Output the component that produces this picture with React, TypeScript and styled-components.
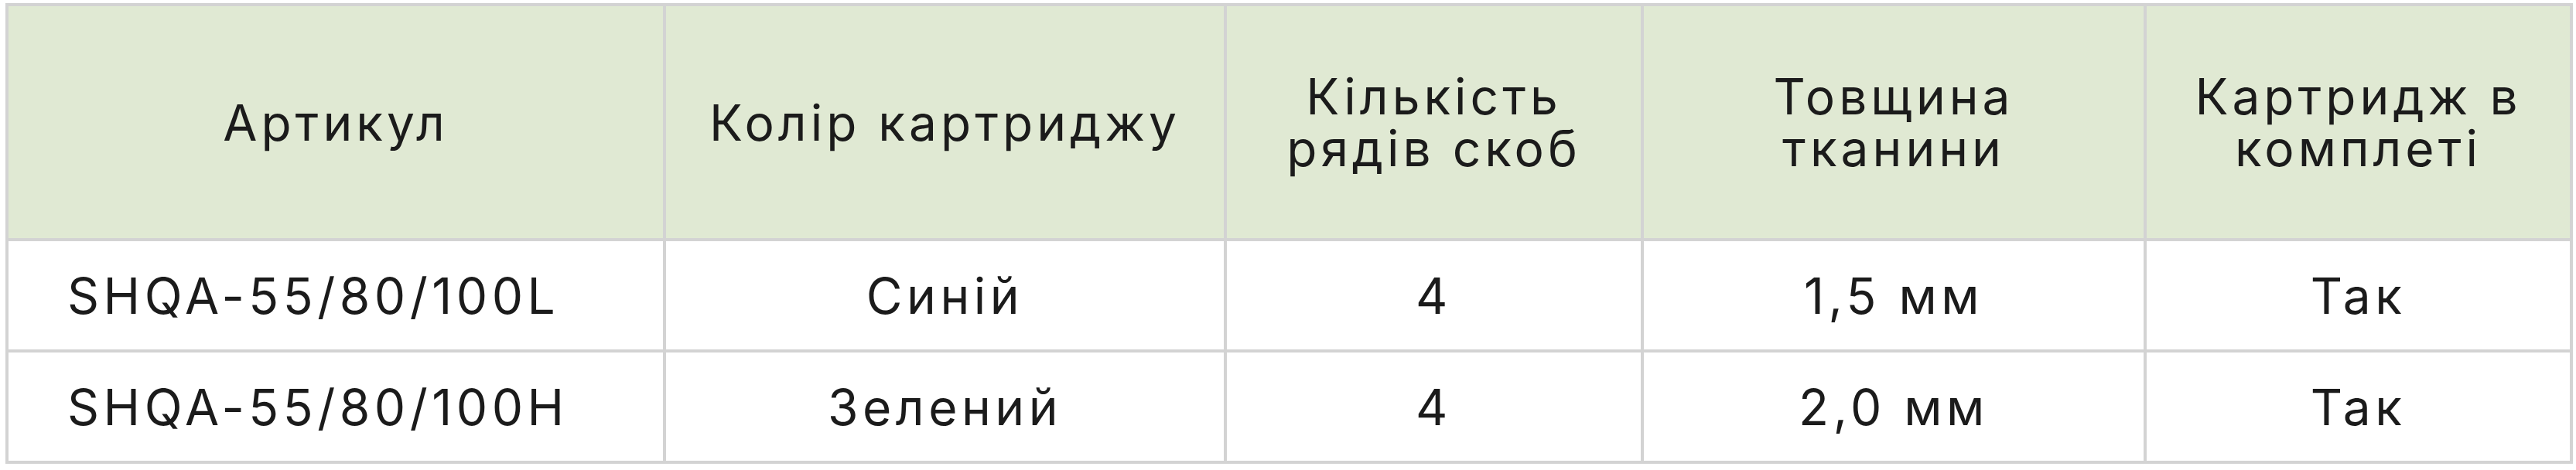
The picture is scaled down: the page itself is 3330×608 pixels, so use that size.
import React from "react";
import styled, { createGlobalStyle } from "styled-components";

const GlobalStyle = createGlobalStyle`
  html, body {
    margin: 0;
    padding: 0;
    background: #ffffff;
  }
`;

const Page = styled.div`
  padding: 4px 6px 0 7px;
  font-family: "Inter", "Open Sans", "Noto Sans", sans-serif;
  color: #1b1b1b;
`;

const Table = styled.table`
  width: 100%;
  border-collapse: collapse;
  table-layout: fixed;
  border: 4px solid #d3d3d3;
`;

const Col = styled.col<{ $w: number }>`
  width: ${(p) => p.$w}px;
`;

const HeadCell = styled.th`
  height: 300px;
  padding: 0 12px;
  background: #e0e9d3;
  border: 4px solid #d3d3d3;
  font-weight: 400;
  font-size: 64px;
  line-height: 67px;
  letter-spacing: 5px;
  text-align: center;
  vertical-align: middle;
`;

const Cell = styled.td<{ $left?: boolean }>`
  height: 140px;
  padding: 0 12px 0 ${(p) => (p.$left ? "76px" : "12px")};
  border: 4px solid #d3d3d3;
  font-size: 64px;
  letter-spacing: 5.5px;
  text-align: ${(p) => (p.$left ? "left" : "center")};
  vertical-align: middle;
  white-space: nowrap;
`;

const columns = [
  { w: 850, title: ["Артикул"] },
  { w: 725, title: ["Колір картриджу"] },
  { w: 539, title: ["Кількість", "рядів скоб"] },
  { w: 650, title: ["Товщина", "тканини"] },
  { w: 551, title: ["Картридж в", "комплеті"] },
];

const rows = [
  ["SHQA-55/80/100L", "Синій", "4", "1,5 мм", "Так"],
  ["SHQA-55/80/100H", "Зелений", "4", "2,0 мм", "Так"],
];

export default function App() {
  return (
    <Page>
      <GlobalStyle />
      <Table>
        <colgroup>
          {columns.map((c, i) => (
            <Col key={i} $w={c.w} />
          ))}
        </colgroup>
        <thead>
          <tr>
            {columns.map((c, i) => (
              <HeadCell key={i}>
                {c.title.map((line, j) => (
                  <React.Fragment key={j}>
                    {j > 0 && <br />}
                    {line}
                  </React.Fragment>
                ))}
              </HeadCell>
            ))}
          </tr>
        </thead>
        <tbody>
          {rows.map((r, i) => (
            <tr key={i}>
              {r.map((v, j) => (
                <Cell key={j} $left={j === 0}>
                  {v}
                </Cell>
              ))}
            </tr>
          ))}
        </tbody>
      </Table>
    </Page>
  );
}
